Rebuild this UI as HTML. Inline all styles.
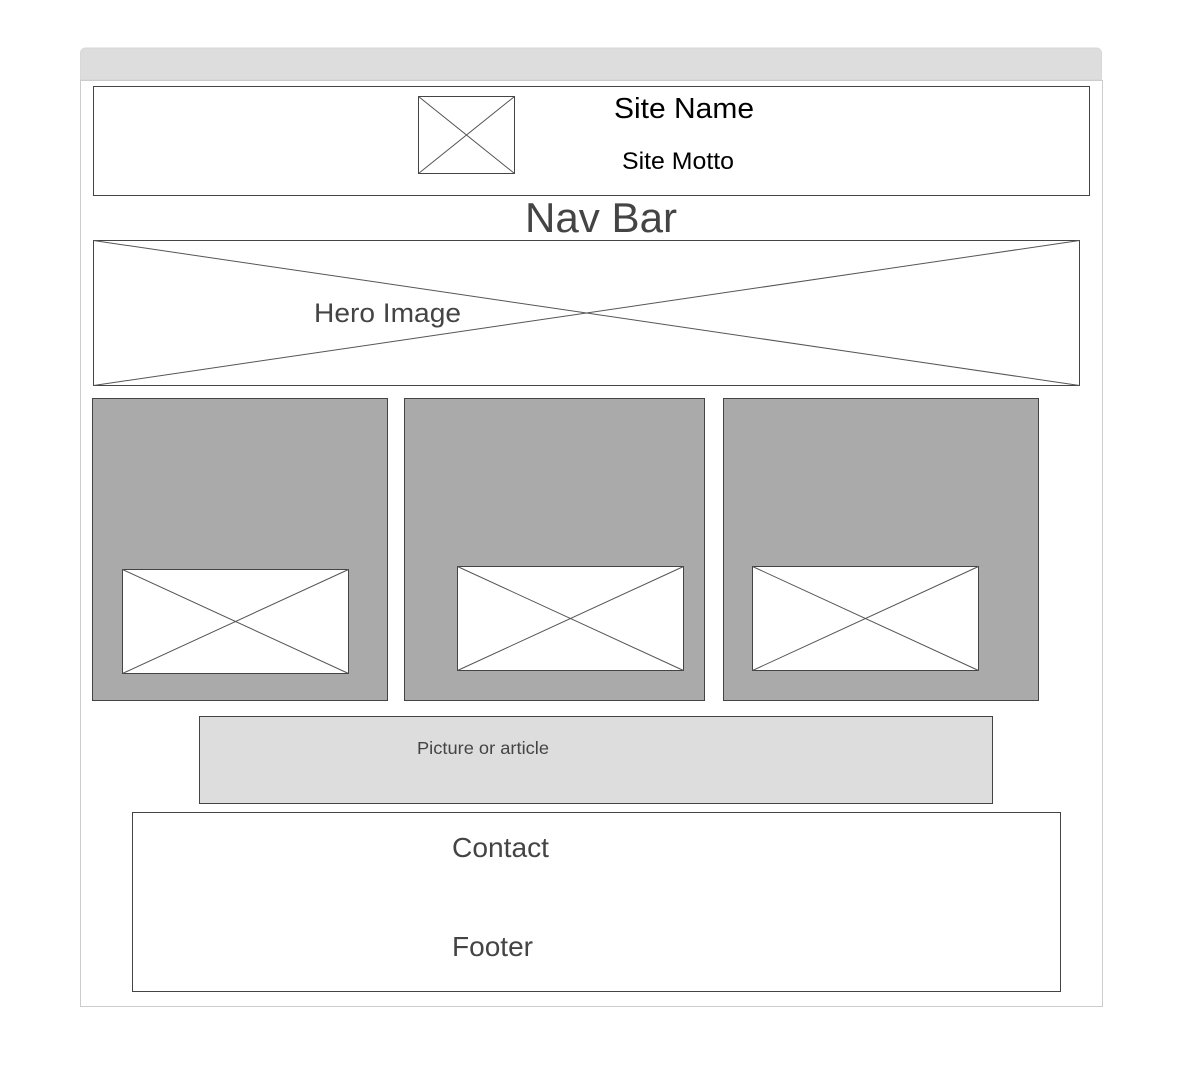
<!DOCTYPE html>
<html><head><meta charset="utf-8"><style>
html,body{margin:0;padding:0;background:#fff;width:1180px;height:1086px;overflow:hidden}
svg{display:block}
text{font-family:"Liberation Sans",Arial,sans-serif}
</style></head><body>
<svg width="1180" height="1086" viewBox="0 0 1180 1086" xmlns="http://www.w3.org/2000/svg">
<path d="M80.5 79.5V53a5 5 0 0 1 5-5h1011a5 5 0 0 1 5 5v26.5z" fill="#dddddd" stroke="#d8d8d8"/>
<rect x="80.5" y="80.5" width="1022" height="926" fill="#fff" stroke="#cccccc"/>
<g fill="none" stroke="#444" stroke-width="1">
<rect x="93.5" y="86.5" width="996" height="109"/>
<rect x="418.5" y="96.5" width="96" height="77"/>
<path d="M418.5 96.5L514.5 173.5M514.5 96.5L418.5 173.5" stroke="#555"/>
<rect x="93.5" y="240.5" width="986" height="145"/>
<path d="M93.5 240.5L1079.5 385.5M1079.5 240.5L93.5 385.5" stroke="#555"/>
</g>
<text x="614" y="118" font-size="29" textLength="140" lengthAdjust="spacingAndGlyphs" fill="#000">Site Name</text>
<text x="622" y="169" font-size="24.5" textLength="112" lengthAdjust="spacingAndGlyphs" fill="#000">Site Motto</text>
<text x="525" y="232" font-size="42" textLength="152" lengthAdjust="spacingAndGlyphs" fill="#444">Nav Bar</text>
<text x="314" y="322" font-size="27" textLength="147" lengthAdjust="spacingAndGlyphs" fill="#444">Hero Image</text>
<g stroke="#444">
<rect x="92.5" y="398.5" width="295" height="302" fill="#aaaaaa"/>
<rect x="404.5" y="398.5" width="300" height="302" fill="#aaaaaa"/>
<rect x="723.5" y="398.5" width="315" height="302" fill="#aaaaaa"/>
<rect x="122.5" y="569.5" width="226" height="104" fill="#fff"/>
<rect x="457.5" y="566.5" width="226" height="104" fill="#fff"/>
<rect x="752.5" y="566.5" width="226" height="104" fill="#fff"/>
<path d="M122.5 569.5L348.5 673.5M348.5 569.5L122.5 673.5M457.5 566.5L683.5 670.5M683.5 566.5L457.5 670.5M752.5 566.5L978.5 670.5M978.5 566.5L752.5 670.5" fill="none" stroke="#555"/>
<rect x="199.5" y="716.5" width="793" height="87" fill="#dddddd"/>
<rect x="132.5" y="812.5" width="928" height="179" fill="#fff"/>
</g>
<text x="417" y="754" font-size="17.5" textLength="132" lengthAdjust="spacingAndGlyphs" fill="#444">Picture or article</text>
<text x="452" y="857" font-size="28" textLength="97" lengthAdjust="spacingAndGlyphs" fill="#444">Contact</text>
<text x="452" y="956" font-size="28" textLength="81" lengthAdjust="spacingAndGlyphs" fill="#444">Footer</text>
</svg>
</body></html>
